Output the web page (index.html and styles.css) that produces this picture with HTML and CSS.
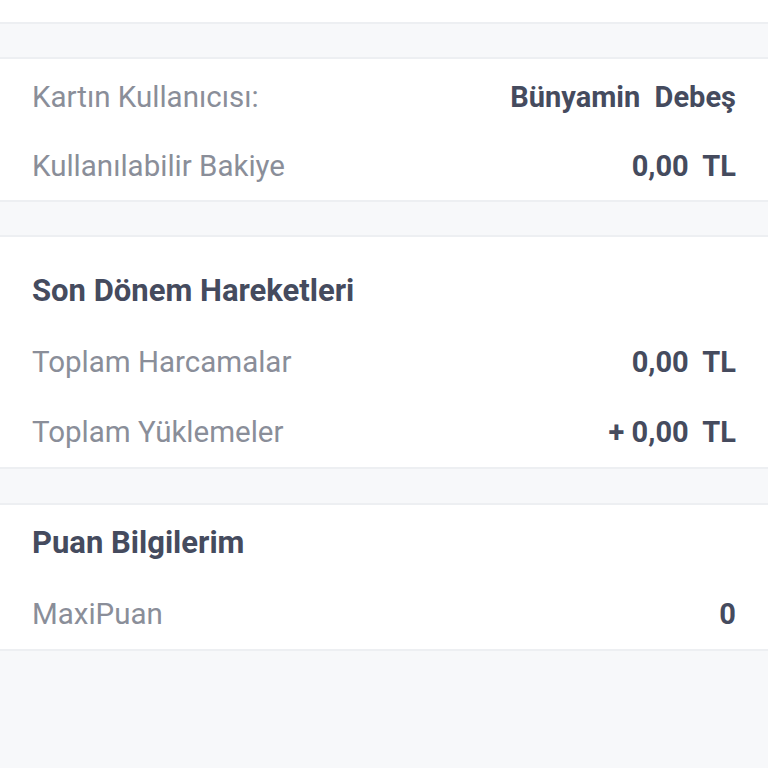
FILE: index.html
```html
<!DOCTYPE html>
<html lang="tr">
<head>
    <meta charset="UTF-8">
    <meta name="viewport" content="width=device-width, initial-scale=1.0">
    <title>Kart Bilgileri</title>
    <link rel="stylesheet" href="styles.css">
</head>
<body>
    <div class="top-strip"></div>

    <section class="card card-info">
        <div class="row">
            <span class="label">Kartın Kullanıcısı:</span>
            <span class="value">Bünyamin  Debeş</span>
        </div>
        <div class="row">
            <span class="label">Kullanılabilir Bakiye</span>
            <span class="value">0,00  TL</span>
        </div>
    </section>

    <section class="card card-moves">
        <h2 class="card-title">Son Dönem Hareketleri</h2>
        <div class="row">
            <span class="label">Toplam Harcamalar</span>
            <span class="value">0,00  TL</span>
        </div>
        <div class="row">
            <span class="label">Toplam Yüklemeler</span>
            <span class="value">+ 0,00  TL</span>
        </div>
    </section>

    <section class="card card-points">
        <h2 class="card-title">Puan Bilgilerim</h2>
        <div class="row">
            <span class="label">MaxiPuan</span>
            <span class="value">0</span>
        </div>
    </section>
</body>
</html>
```

FILE: styles.css
```css
* {
    margin: 0;
    padding: 0;
    box-sizing: border-box;
}

body {
    background: #f7f8fa;
    font-family: Roboto, 'Noto Sans', sans-serif;
    color: #454b5e;
    height: 768px;
    overflow: hidden;
}

.top-strip {
    height: 24px;
    background: #fff;
    border-bottom: 2px solid #edeff2;
}

.card {
    background: #fff;
    border-top: 2px solid #edeff2;
    border-bottom: 2px solid #edeff2;
    margin-top: 33px;
}

.card-info {
    padding-top: 3px;
}

.card-info .row {
    height: 69px;
}

.card-moves {
    padding-top: 20px;
}

.card-points {
    margin-top: 34px;
    padding-top: 4px;
}

.card-title {
    height: 70px;
    display: flex;
    align-items: center;
    padding: 0 32px 4px;
    font-size: 31px;
    font-weight: 700;
}

.row {
    height: 70px;
    display: flex;
    align-items: center;
    justify-content: space-between;
    padding: 0 32px;
}

.label {
    font-size: 29.5px;
    color: #8a8e99;
}

.value {
    font-size: 29px;
    font-weight: 700;
    white-space: pre;
}
```
